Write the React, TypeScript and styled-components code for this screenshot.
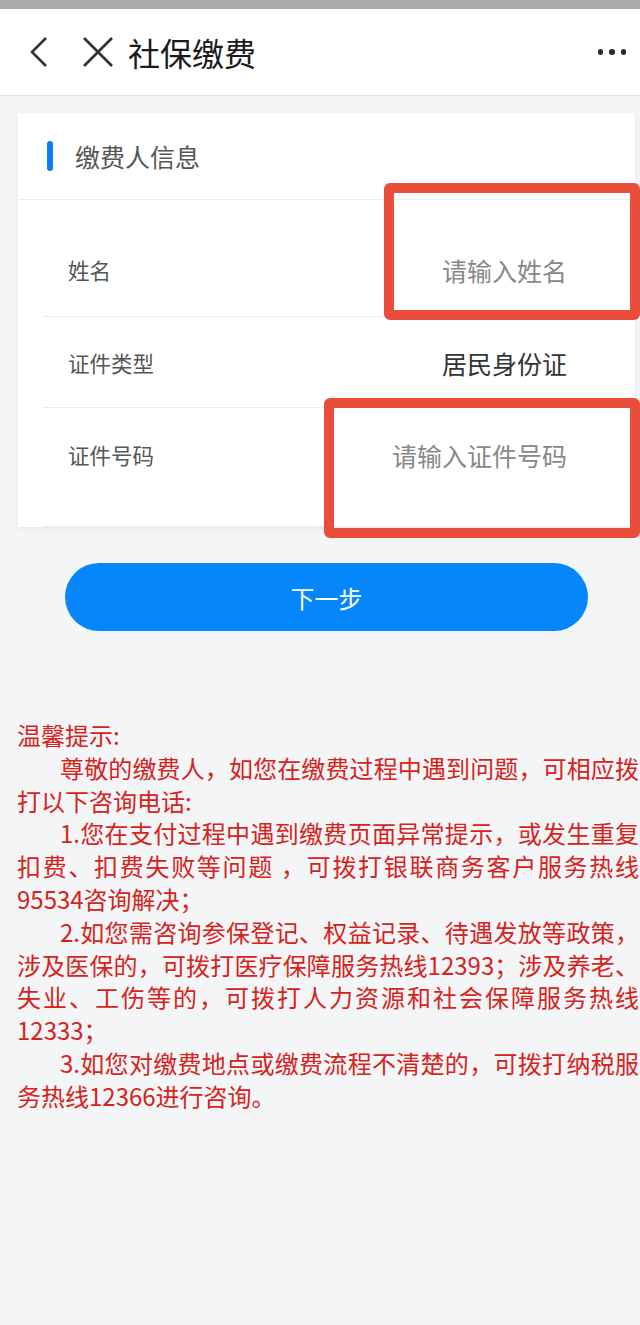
import React from 'react';
import styled, { createGlobalStyle } from 'styled-components';

const GlobalStyle = createGlobalStyle`
  html, body {
    margin: 0;
    padding: 0;
    background: #f4f5f7;
    overflow-x: hidden;
  }
  body {
    font-family: "Noto Sans CJK SC", "Noto Sans", sans-serif;
  }
`;

const rows = [
  { label: '姓名', value: '请输入姓名', placeholder: true, height: 117, top: 55 },
  { label: '证件类型', value: '居民身份证', placeholder: false, height: 91, top: 31 },
  { label: '证件号码', value: '请输入证件号码', placeholder: true, height: 119, top: 32 },
];

const tips = [
  '尊敬的缴费人，如您在缴费过程中遇到问题，可相应拨打以下咨询电话:',
  '1.您在支付过程中遇到缴费页面异常提示，或发生重复扣费、扣费失败等问题 ，可拨打银联商务客户服务热线95534咨询解决；',
  '2.如您需咨询参保登记、权益记录、待遇发放等政策，涉及医保的，可拨打医疗保障服务热线12393；涉及养老、失业、工伤等的，可拨打人力资源和社会保障服务热线12333；',
  '3.如您对缴费地点或缴费流程不清楚的，可拨打纳税服务热线12366进行咨询。',
];

const App: React.FC = () => {
  return (
    <>
      <GlobalStyle />
      <Page>
        <StatusStrip />
        <Header>
          <IconButton>
            <svg width="22" height="32" viewBox="0 0 22 32">
              <polyline points="18,2 4,16 18,30" fill="none" stroke="#333" strokeWidth="2.6" />
            </svg>
          </IconButton>
          <IconButton>
            <svg width="32" height="32" viewBox="0 0 32 32">
              <line x1="2" y1="2" x2="30" y2="30" stroke="#333" strokeWidth="2.6" />
              <line x1="30" y1="2" x2="2" y2="30" stroke="#333" strokeWidth="2.6" />
            </svg>
          </IconButton>
          <Title>社保缴费</Title>
          <MoreDots>
            <Dot />
            <Dot />
            <Dot />
          </MoreDots>
        </Header>

        <Card>
          <CardHeader>
            <AccentBar />
            <CardTitle>缴费人信息</CardTitle>
          </CardHeader>
          {rows.map((r) => (
            <FieldRow key={r.label} $height={r.height} $top={r.top}>
              <FieldLabel>{r.label}</FieldLabel>
              <FieldValue $placeholder={r.placeholder}>{r.value}</FieldValue>
            </FieldRow>
          ))}
          <Highlight $left={366} $top={70} $height={137} />
          <Highlight $left={306} $top={285} $height={140} />
        </Card>

        <NextButton>下一步</NextButton>

        <Tips>
          <TipsTitle>温馨提示:</TipsTitle>
          {tips.map((t) => (
            <TipParagraph key={t}>{t}</TipParagraph>
          ))}
        </Tips>
      </Page>
    </>
  );
};

export default App;

const Page = styled.div`
  min-height: 1325px;
  display: flex;
  flex-direction: column;
`;

const StatusStrip = styled.div`
  height: 9px;
  background: #ababab;
`;

const Header = styled.div`
  height: 86px;
  background: #fff;
  border-bottom: 1px solid #e3e3e5;
  display: flex;
  align-items: center;
  padding-left: 28px;
  padding-right: 14px;
`;

const IconButton = styled.div`
  display: flex;
  align-items: center;
  margin-right: 32px;

  &:nth-child(2) {
    margin-right: 14px;
  }
`;

const Title = styled.div`
  font-size: 32px;
  color: #1a1a1a;
  flex: 1;
  line-height: 1;
`;

const MoreDots = styled.div`
  display: flex;
  gap: 6px;
  align-items: center;
`;

const Dot = styled.span`
  width: 5.5px;
  height: 5.5px;
  border-radius: 50%;
  background: #2b2b2b;
`;

const Card = styled.div`
  position: relative;
  margin: 17px 5px 0 18px;
  background: #fff;
  box-shadow: 0 2px 6px rgba(0, 0, 0, 0.06);
`;

const CardHeader = styled.div`
  height: 86px;
  border-bottom: 1px solid #ececee;
  display: flex;
  align-items: center;
  padding-left: 29px;
`;

const AccentBar = styled.span`
  width: 6px;
  height: 30px;
  border-radius: 3px;
  background: #0a7cf6;
  margin-right: 22px;
`;

const CardTitle = styled.span`
  font-size: 25px;
  color: #555;
`;

const FieldRow = styled.div<{ $height: number; $top: number }>`
  box-sizing: border-box;
  height: ${(p) => p.$height}px;
  padding-top: ${(p) => p.$top}px;
  margin-left: 25px;
  padding-left: 25px;
  padding-right: 68px;
  display: flex;
  justify-content: space-between;
  align-items: flex-start;
  line-height: 30px;

  &:not(:last-of-type) {
    border-bottom: 1px solid #ececee;
  }
`;

const FieldLabel = styled.span`
  font-size: 21.5px;
  color: #555;
`;

const FieldValue = styled.span<{ $placeholder: boolean }>`
  font-size: 25px;
  color: ${(p) => (p.$placeholder ? '#888' : '#333')};
`;

const Highlight = styled.div<{ $left: number; $top: number; $height: number }>`
  position: absolute;
  left: ${(p) => p.$left}px;
  right: -5px;
  top: ${(p) => p.$top}px;
  height: ${(p) => p.$height}px;
  box-sizing: border-box;
  border: 10px solid #e94d3c;
  border-radius: 6px;
  pointer-events: none;
`;

const NextButton = styled.button`
  margin: 36px 0 0 65px;
  width: 523px;
  height: 68px;
  border: none;
  border-radius: 34px;
  background: #0586fb;
  color: #fff;
  font-family: inherit;
  font-size: 24px;
  padding: 0;
`;

const Tips = styled.div`
  margin-top: 88px;
  padding-left: 17px;
  width: 622px;
  color: #d6231c;
  font-size: 24px;
  line-height: 32.8px;
  text-align: justify;
`;

const TipsTitle = styled.div``;

const TipParagraph = styled.p`
  margin: 0;
  text-indent: 43px;
`;
